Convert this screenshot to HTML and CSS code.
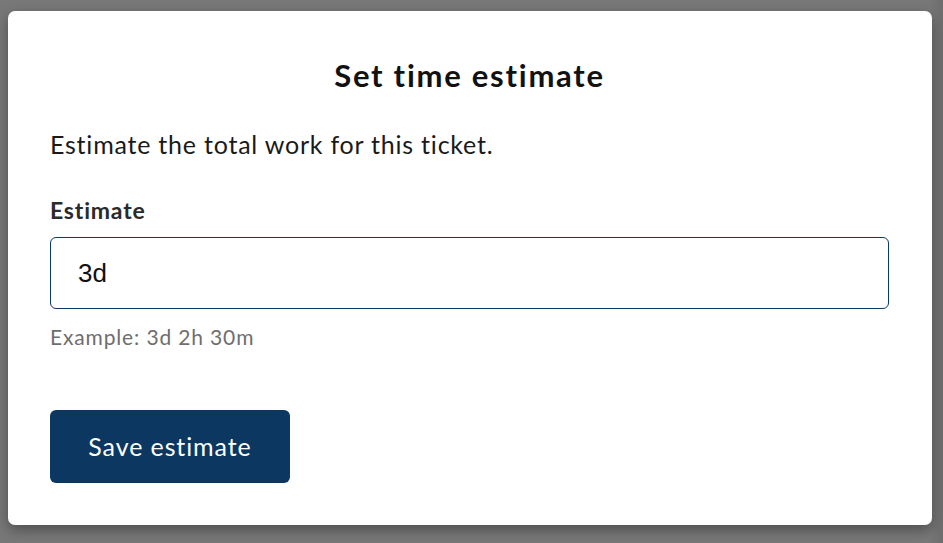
FILE: index.html
```html
<!DOCTYPE html>
<html lang="en">
<head>
<meta charset="utf-8">
<title>Set time estimate</title>
<link rel="stylesheet" href="styles.css">
</head>
<body>
<div class="backdrop">
  <div class="modal" role="dialog" aria-labelledby="t">
    <h1 class="title" id="t">Set time estimate</h1>
    <p class="intro">Estimate the total work for this ticket.</p>
    <label class="label" for="est">Estimate</label>
    <input class="field" id="est" type="text" value="3d">
    <p class="hint">Example: 3d 2h 30m</p>
    <button class="save" type="button">Save estimate</button>
  </div>
</div>
</body>
</html>
```
FILE: styles.css
```css
html, body {
  margin: 0;
  padding: 0;
  height: 100%;
}
body {
  background: #787878;
  font-family: Lato, "Noto Sans", sans-serif;
  font-variant-ligatures: none;
  overflow: hidden;
}
.backdrop {
  padding: 11px 11px 0 8px;
  background: linear-gradient(90deg, transparent 930px, #6f6f6f 940px);
  height: 100%;
  box-sizing: border-box;
}
.modal {
  background: #fff;
  border-radius: 7px;
  box-shadow: 0 5px 14px rgba(0, 0, 0, 0.35);
  padding: 46px 43px 42px 42px;
  display: flex;
  flex-direction: column;
  align-items: flex-start;
}
.title {
  align-self: stretch;
  margin: 0;
  text-align: center;
  font-size: 31px;
  line-height: 36px;
  font-weight: 700;
  letter-spacing: 1.75px;
  color: #111;
}
.intro {
  margin: 37px 0 0;
  font-size: 25px;
  line-height: 29px;
  letter-spacing: 0.78px;
  color: #1a1a1a;
}
.label {
  margin-top: 38px;
  font-size: 23px;
  line-height: 26px;
  font-weight: 700;
  letter-spacing: 0.8px;
  color: #2a2a2a;
}
.field {
  margin-top: 14px;
  align-self: stretch;
  box-sizing: border-box;
  height: 72px;
  border: 1px solid #0b3a66;
  border-radius: 6px;
  padding: 0 27px;
  font-family: "Liberation Sans", Arial, sans-serif;
  font-size: 26px;
  color: #111;
  background: #fff;
  outline: none;
}
.hint {
  margin: 16px 0 0;
  font-size: 21px;
  line-height: 24px;
  letter-spacing: 0.85px;
  color: #6e6e6e;
}
.save {
  margin-top: 61px;
  width: 240px;
  height: 73px;
  padding: 0 0 2px;
  border: 0;
  border-radius: 6px;
  background: #0b3761;
  color: #fff;
  font-family: Lato, "Noto Sans", sans-serif;
  font-variant-ligatures: none;
  font-size: 25px;
  letter-spacing: 0.9px;
  cursor: pointer;
}
```
